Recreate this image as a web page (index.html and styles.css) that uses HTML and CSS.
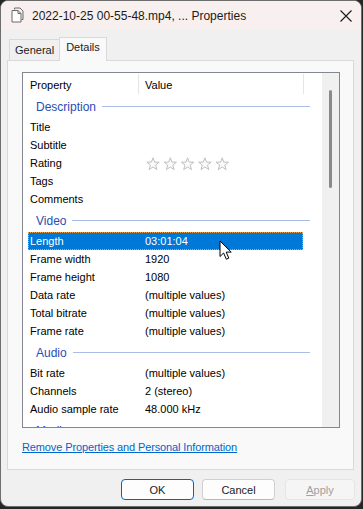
FILE: index.html
```html
<!DOCTYPE html>
<html lang="en">
<head>
  <meta charset="UTF-8">
  <title>Properties</title>
  <link rel="stylesheet" href="styles.css">
</head>
<body>

<div class="window">
  <div class="titlebar">
    <svg class="file-icon" width="13" height="16" viewBox="0 0 13 16">
      <path d="M3.5 2.5 V1 H9 L12 4 V12.5 H10.5" fill="none" stroke="#6a6a6a"/>
      <path d="M1 3.5 H7 L10 6.5 V15 H1 Z" fill="#fff" stroke="#6a6a6a"/>
      <path d="M7 3.5 V6.5 H10" fill="none" stroke="#6a6a6a"/>
    </svg>
    <span class="title">2022-10-25 00-55-48.mp4, ... Properties</span>
    <svg class="close" width="12" height="12" viewBox="0 0 12 12">
      <path d="M0.5 0.5 L11.5 11.5 M11.5 0.5 L0.5 11.5" stroke="#1a1a1a" stroke-width="1.1"/>
    </svg>
  </div>

  <div class="tabs">
    <div class="tab">General</div>
    <div class="tab active">Details</div>
  </div>

  <div class="panel">
    <div class="listbox">
      <div class="list">
        <div class="list-head">
          <div class="col-prop">Property</div>
          <div class="col-value">Value</div>
        </div>

        <div class="group"><span>Description</span><i></i></div>
        <div class="row"><span class="label">Title</span><span class="value"></span></div>
        <div class="row"><span class="label">Subtitle</span><span class="value"></span></div>
        <div class="row">
          <span class="label">Rating</span>
          <span class="value">
            <svg class="stars" width="84" height="14" viewBox="0 0 84 14">
              <defs>
                <polygon id="star" points="7,0.8 8.6,5.1 13.2,5.2 9.6,8.1 10.9,12.6 7,10 3.1,12.6 4.4,8.1 0.8,5.2 5.4,5.1" fill="#fafafa" stroke="#b9b9b9" stroke-width="0.9"/>
              </defs>
              <use href="#star" x="0"/>
              <use href="#star" x="17.3"/>
              <use href="#star" x="34.6"/>
              <use href="#star" x="51.9"/>
              <use href="#star" x="69.2"/>
            </svg>
          </span>
        </div>
        <div class="row"><span class="label">Tags</span><span class="value"></span></div>
        <div class="row"><span class="label">Comments</span><span class="value"></span></div>

        <div class="group"><span>Video</span><i></i></div>
        <div class="row selected"><span class="label">Length</span><span class="value">03:01:04</span></div>
        <div class="row"><span class="label">Frame width</span><span class="value">1920</span></div>
        <div class="row"><span class="label">Frame height</span><span class="value">1080</span></div>
        <div class="row"><span class="label">Data rate</span><span class="value">(multiple values)</span></div>
        <div class="row"><span class="label">Total bitrate</span><span class="value">(multiple values)</span></div>
        <div class="row"><span class="label">Frame rate</span><span class="value">(multiple values)</span></div>

        <div class="group"><span>Audio</span><i></i></div>
        <div class="row"><span class="label">Bit rate</span><span class="value">(multiple values)</span></div>
        <div class="row"><span class="label">Channels</span><span class="value">2 (stereo)</span></div>
        <div class="row"><span class="label">Audio sample rate</span><span class="value">48.000 kHz</span></div>

        <div class="group"><span>Media</span><i></i></div>
      </div>
      <div class="scrollbar">
        <div class="thumb"></div>
      </div>
    </div>

    <a class="remove-link" href="#">Remove Properties and Personal Information</a>
  </div>

  <div class="actions">
    <button class="btn default">OK</button>
    <button class="btn">Cancel</button>
    <button class="btn disabled"><u>A</u>pply</button>
  </div>

  <svg class="cursor" width="14" height="21" viewBox="0 0 14 21">
    <path d="M1 1 L1 16.5 L4.6 13 L7.3 19.2 L9.8 18.1 L7.2 12.1 L12.2 12.1 Z" fill="#fff" stroke="#000" stroke-width="1" stroke-linejoin="round"/>
  </svg>
</div>

</body>
</html>
```

FILE: styles.css
```css
body {
  margin: 0;
  padding: 0;
  background: #262626;
  font-family: "Segoe UI", "Liberation Sans", Arial, sans-serif;
  font-size: 11px;
  color: #000;
}

.window {
  position: relative;
  width: 360px;
  height: 505px;
  background: #f0f0f0;
  border: 1px solid #6e6e6e;
  border-radius: 8px;
  overflow: hidden;
  display: flex;
  flex-direction: column;
}

.titlebar {
  height: 29px;
  background: #f8efef;
  display: flex;
  align-items: center;
  padding-left: 10px;
  flex-shrink: 0;
}

.file-icon {
  margin-top: -1px;
}

.title {
  font-size: 12px;
  color: #1b1b1b;
  margin-left: 8px;
  flex: 1;
}

.close {
  margin-right: 9px;
}

.tabs {
  display: flex;
  align-items: flex-end;
  height: 24px;
  margin-top: 6px;
  padding-left: 8px;
  flex-shrink: 0;
}

.tab {
  height: 20px;
  line-height: 21px;
  padding: 0 5px;
  border: 1px solid #d9d9d9;
  border-bottom: none;
  border-right: none;
  background: #f0f0f0;
  color: #1b1b1b;
}

.tab.active {
  height: 23px;
  line-height: 18px;
  padding: 0 6px;
  border-right: 1px solid #d9d9d9;
  background: #f9f9f9;
  margin-bottom: -1px;
  position: relative;
  z-index: 1;
}

.panel {
  margin: 0 7px 0 6px;
  background: #f9f9f9;
  border: 1px solid #d9d9d9;
  padding: 11px 0 0 14px;
  box-sizing: border-box;
  height: 410px;
  flex-shrink: 0;
}

.listbox {
  width: 318px;
  height: 356px;
  box-sizing: border-box;
  border: 1px solid #828790;
  background: #fff;
  display: flex;
}

.list {
  flex: 1;
  overflow: hidden;
}

.list-head {
  display: flex;
  height: 20px;
  line-height: 22px;
  padding-top: 1px;
}

.col-prop {
  width: 108px;
  padding-left: 7px;
  border-right: 1px solid #e5e5e5;
}

.col-value {
  width: 158px;
  padding-left: 6px;
  border-right: 1px solid #e5e5e5;
}

.group {
  height: 24px;
  display: flex;
  align-items: center;
  padding: 1px 12px 0 13px;
  box-sizing: border-box;
  color: #2a4db3;
  font-size: 12px;
}

.group i {
  flex: 1;
  height: 1px;
  margin-left: 6px;
  background: #a9bde6;
}

.row {
  display: flex;
  align-items: center;
  height: 18px;
  width: 275px;
  margin-left: 5px;
  padding-left: 2px;
  box-sizing: border-box;
}

.label {
  width: 115px;
  flex-shrink: 0;
}

.stars {
  display: block;
  margin-left: 1px;
  margin-top: 1px;
}

.row.selected {
  background: #0078d7;
  color: #fff;
  outline: 1px dotted #e9a34a;
  outline-offset: -1px;
}

.scrollbar {
  width: 17px;
  background: #f0f0f0;
  flex-shrink: 0;
  display: flex;
  justify-content: center;
  padding-top: 17px;
  box-sizing: border-box;
}

.thumb {
  width: 3px;
  height: 98px;
  background: #8a8a8a;
  border-radius: 2px;
  margin-left: -1px;
}

.remove-link {
  display: block;
  margin-top: 11px;
  color: #0066cc;
  font-size: 11px;
  letter-spacing: -0.12px;
  line-height: 16px;
  width: max-content;
}

.actions {
  display: flex;
  justify-content: flex-end;
  margin-top: 9px;
  padding-right: 6px;
  gap: 8px;
}

.btn {
  font-family: inherit;
  font-size: 11px;
  height: 21px;
  width: 73px;
  padding: 0;
  border: 1px solid #d0d0d0;
  border-bottom-color: #b8b8b8;
  border-radius: 4px;
  background: #fdfdfd;
  color: #1b1b1b;
}

.btn.default {
  border-color: #0067c0;
}

.btn.disabled {
  width: 70px;
  margin-left: 2px;
  background: #f5f5f5;
  border-color: #e5e5e5;
  color: #a0a0a0;
}

.cursor {
  position: absolute;
  left: 218px;
  top: 239px;
}
```
